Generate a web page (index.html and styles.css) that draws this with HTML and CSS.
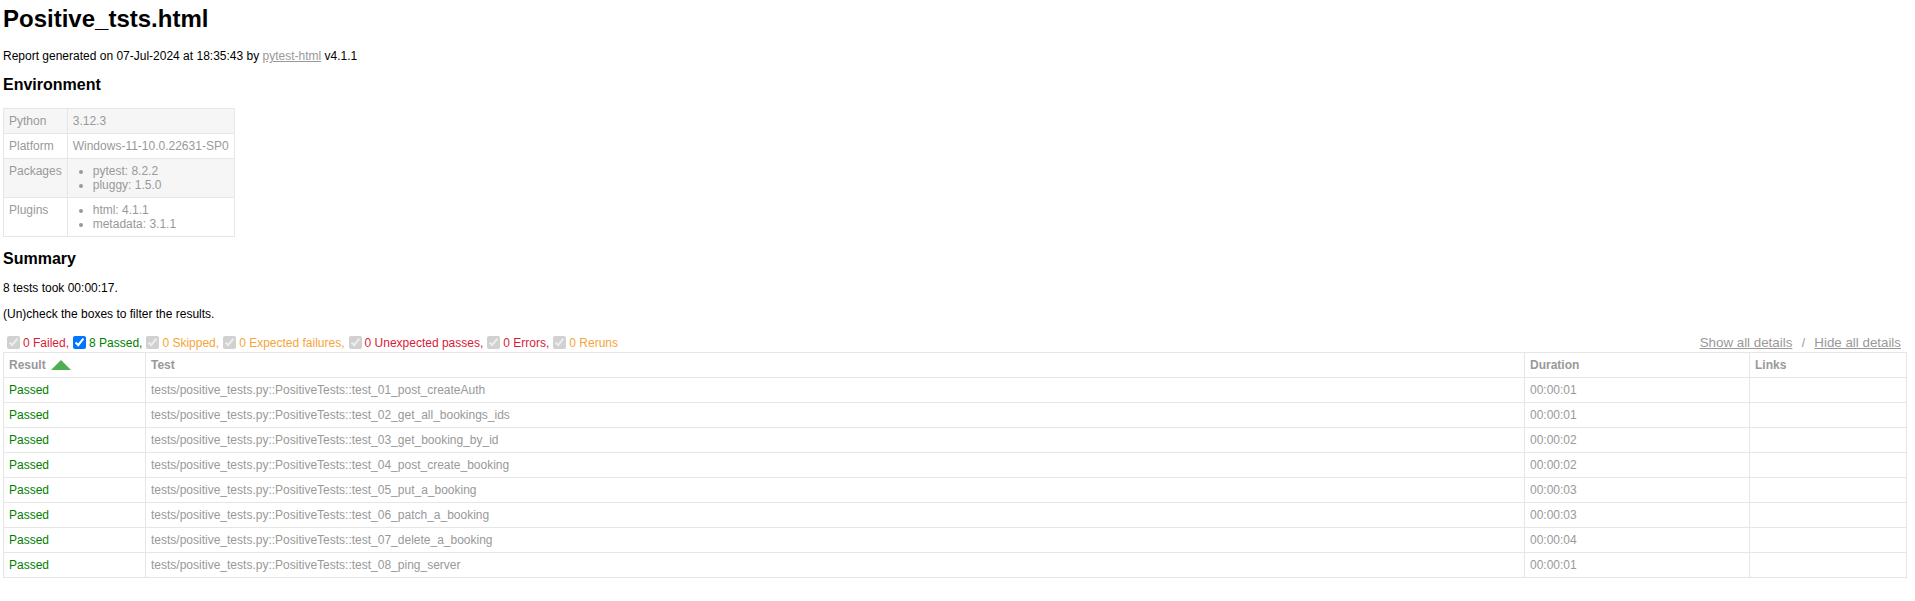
FILE: index.html
```html
<!DOCTYPE html>
<html>
<head>
<meta charset="utf-8">
<title>Positive_tsts.html</title>
<link rel="stylesheet" href="styles.css">
</head>
<body>
<h1 class="title">Positive_tsts.html</h1>
<p class="generated">Report generated on 07-Jul-2024 at 18:35:43 by <a href="#">pytest-html</a> v4.1.1</p>
<div class="environment-section">
  <h2>Environment</h2>
  <table class="environment">
    <tr><td class="env-key">Python</td><td>3.12.3</td></tr>
    <tr><td class="env-key">Platform</td><td>Windows-11-10.0.22631-SP0</td></tr>
    <tr><td class="env-key">Packages</td><td><ul><li>pytest: 8.2.2</li><li>pluggy: 1.5.0</li></ul></td></tr>
    <tr><td class="env-key">Plugins</td><td><ul><li>html: 4.1.1</li><li>metadata: 3.1.1</li></ul></td></tr>
  </table>
</div>
<div class="summary">
  <h2>Summary</h2>
  <p class="run-count">8 tests took 00:00:17.</p>
  <p class="filter-hint">(Un)check the boxes to filter the results.</p>
  <div class="controls">
    <div class="filters">
      <input class="filter" type="checkbox" checked disabled><span class="failed">0 Failed,</span>
      <input class="filter" type="checkbox" checked><span class="passed">8 Passed,</span>
      <input class="filter" type="checkbox" checked disabled><span class="skipped">0 Skipped,</span>
      <input class="filter" type="checkbox" checked disabled><span class="xfailed">0 Expected failures,</span>
      <input class="filter" type="checkbox" checked disabled><span class="xpassed">0 Unexpected passes,</span>
      <input class="filter" type="checkbox" checked disabled><span class="error">0 Errors,</span>
      <input class="filter" type="checkbox" checked disabled><span class="rerun">0 Reruns</span>
    </div>
    <div class="collapse">
      <button class="link-button">Show all details</button><span class="sep">&nbsp;/&nbsp;</span><button class="link-button">Hide all details</button>
    </div>
  </div>
</div>
<table class="results-table">
  <thead>
    <tr>
      <th class="sortable asc col-result">Result</th>
      <th class="col-name">Test</th>
      <th class="col-duration">Duration</th>
      <th class="col-links">Links</th>
    </tr>
  </thead>
  <tbody class="passed">
    <tr><td class="col-result">Passed</td><td class="col-name">tests/positive_tests.py::PositiveTests::test_01_post_createAuth</td><td class="col-duration">00:00:01</td><td class="col-links"></td></tr>
  </tbody>
  <tbody class="passed">
    <tr><td class="col-result">Passed</td><td class="col-name">tests/positive_tests.py::PositiveTests::test_02_get_all_bookings_ids</td><td class="col-duration">00:00:01</td><td class="col-links"></td></tr>
  </tbody>
  <tbody class="passed">
    <tr><td class="col-result">Passed</td><td class="col-name">tests/positive_tests.py::PositiveTests::test_03_get_booking_by_id</td><td class="col-duration">00:00:02</td><td class="col-links"></td></tr>
  </tbody>
  <tbody class="passed">
    <tr><td class="col-result">Passed</td><td class="col-name">tests/positive_tests.py::PositiveTests::test_04_post_create_booking</td><td class="col-duration">00:00:02</td><td class="col-links"></td></tr>
  </tbody>
  <tbody class="passed">
    <tr><td class="col-result">Passed</td><td class="col-name">tests/positive_tests.py::PositiveTests::test_05_put_a_booking</td><td class="col-duration">00:00:03</td><td class="col-links"></td></tr>
  </tbody>
  <tbody class="passed">
    <tr><td class="col-result">Passed</td><td class="col-name">tests/positive_tests.py::PositiveTests::test_06_patch_a_booking</td><td class="col-duration">00:00:03</td><td class="col-links"></td></tr>
  </tbody>
  <tbody class="passed">
    <tr><td class="col-result">Passed</td><td class="col-name">tests/positive_tests.py::PositiveTests::test_07_delete_a_booking</td><td class="col-duration">00:00:04</td><td class="col-links"></td></tr>
  </tbody>
  <tbody class="passed">
    <tr><td class="col-result">Passed</td><td class="col-name">tests/positive_tests.py::PositiveTests::test_08_ping_server</td><td class="col-duration">00:00:01</td><td class="col-links"></td></tr>
  </tbody>
</table>
</body>
</html>
```

FILE: styles.css
```css
body {
  font-family: "Liberation Sans", Arial, Helvetica, sans-serif;
  font-size: 12px;
  color: #999;
  margin: 5px 8px 8px 3px;
  min-width: 800px;
}

h1 {
  font-size: 24px;
  color: black;
  margin: 0 0 16px;
}

h2 {
  font-size: 16px;
  color: black;
  margin: 13.28px 0;
}

p {
  color: black;
  margin: 12px 0;
}

a {
  color: #999;
}

table {
  border-collapse: collapse;
}

.environment td {
  padding: 5px;
  border: 1px solid #e6e6e6;
  vertical-align: top;
}

.environment tr:nth-child(odd) {
  background-color: #f6f6f6;
}

.environment ul {
  margin: 0;
  padding: 0 20px;
}

.controls {
  display: flex;
  justify-content: space-between;
}

.filters,
.collapse {
  display: flex;
  align-items: center;
}

.filter {
  margin: 3px 3px 3px 4px;
}

.link-button {
  font-family: "Liberation Sans", Arial, sans-serif;
  font-size: 13.333px;
  color: #999;
  border: none;
  background: none;
  cursor: pointer;
  text-decoration: underline;
  padding: 1px 6px;
}

.sep {
  font-size: 12px;
}

span.passed,
.passed .col-result {
  color: green;
}

span.skipped,
span.xfailed,
span.rerun {
  color: #f5a53a;
}

span.error,
span.failed,
span.xpassed {
  color: #d81b3a;
}

.results-table {
  border: 1px solid #e6e6e6;
  color: #999;
  font-size: 12px;
  width: 100%;
}

.results-table th,
.results-table td {
  padding: 5px;
  border: 1px solid #e6e6e6;
  text-align: left;
}

.results-table th {
  font-weight: bold;
}

.results-table th.col-result {
  width: 131px;
}

.results-table th.col-name {
  width: 1368px;
}

.results-table th.col-duration {
  width: 214px;
}

.sortable {
  cursor: pointer;
}

.sortable.asc::after {
  content: " ";
  position: relative;
  left: 5px;
  bottom: 12.5px;
  border: 10px solid #4caf50;
  border-top: 0;
  border-left-color: transparent;
  border-right-color: transparent;
}
```
